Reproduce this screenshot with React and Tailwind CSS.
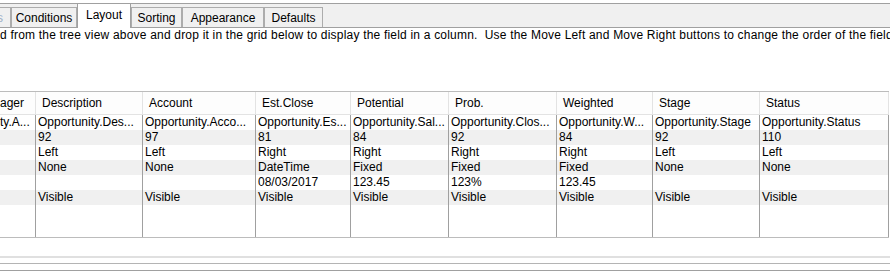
import React from "react";

const cols = [
  { head: "ager", hp: "pl-0", bp: "pl-0", cells: ["ty.A...", "", "", "", "", ""] },
  { head: "Description", cells: ["Opportunity.Des...", "92", "Left", "None", "", "Visible"] },
  { head: "Account", cells: ["Opportunity.Acco...", "97", "Left", "None", "", "Visible"] },
  { head: "Est.Close", cells: ["Opportunity.Es...", "81", "Right", "DateTime", "08/03/2017", "Visible"] },
  { head: "Potential", cells: ["Opportunity.Sal...", "84", "Right", "Fixed", "123.45", "Visible"] },
  { head: "Prob.", cells: ["Opportunity.Clos...", "92", "Right", "Fixed", "123%", "Visible"] },
  { head: "Weighted", cells: ["Opportunity.W...", "84", "Right", "Fixed", "123.45", "Visible"] },
  { head: "Stage", cells: ["Opportunity.Stage", "92", "Left", "None", "", "Visible"] },
  { head: "Status", cells: ["Opportunity.Status", "110", "Left", "None", "", "Visible"] },
];

const tabs = [
  { label: "Conditions", w: "w-[66px]" },
  { label: "Layout", w: "w-[54px]", active: true },
  { label: "Sorting", w: "w-[51px]" },
  { label: "Appearance", w: "w-[82px]" },
  { label: "Defaults", w: "w-[59px]" },
];

export default function App() {
  return (
    <div className="w-[890px] h-[275px] bg-white overflow-hidden font-['Liberation_Sans',Arial,sans-serif] text-[12px] text-black">
      <div className="h-[3px] bg-white" />
      {/* tab strip */}
      <div className="flex items-end h-[25px] bg-[#f0f0f0] border-t border-b border-[#a0a0a0]">
        <div className="w-[11px] h-[20px] border-t border-r border-[#acacac] bg-[#f0f0f0] overflow-hidden flex items-center">
          <span className="ml-[-3px] text-[#9fb0c8] leading-none">s</span>
        </div>
        {tabs.map((t) =>
          t.active ? (
            <div
              key={t.label}
              className={`${t.w} h-[25px] -mb-px bg-white border-t border-l border-r border-[#a0a0a0] flex justify-center pt-[4px] leading-[14px] relative z-10`}
            >
              {t.label}
            </div>
          ) : (
            <div
              key={t.label}
              className={`${t.w} h-[20px] bg-[#f0f0f0] border-t border-l border-r border-[#acacac] flex items-center justify-center leading-[14px]`}
            >
              {t.label}
            </div>
          )
        )}
      </div>
      {/* instruction */}
      <div className="whitespace-nowrap leading-[12px] pt-[1px] tracking-[0.2px]">
        d from the tree view above and drop it in the grid below to display the field in a column.&nbsp; Use the Move Left and Move Right buttons to change the order of the fields
      </div>
      {/* grid */}
      <div className="mt-[50px] w-[889px] h-[147px] border-t border-b border-[#bcbcbc] grid grid-cols-[36px_107px_113px_95px_98px_108px_96px_107px_129px]">
        {cols.map((c, i) => (
          <div key={i} className="flex flex-col min-w-0">
            <div
              className={`h-[23px] shrink-0 bg-[#fdfdfd] border-r border-b border-[#e3e3e3] flex items-center whitespace-nowrap overflow-hidden ${c.hp || "pl-[6px]"}`}
            >
              {c.head}
            </div>
            {c.cells.map((v, r) => (
              <div
                key={r}
                className={`h-[15px] shrink-0 leading-[15px] border-r border-[#a0a0a0] whitespace-nowrap overflow-hidden ${c.bp || "pl-[2px]"} ${r % 2 === 1 ? "bg-[#f0f0f0]" : "bg-white"}`}
              >
                {v}
              </div>
            ))}
            <div className="flex-1 bg-white border-r border-[#a0a0a0]" />
          </div>
        ))}
      </div>
      {/* bottom lines */}
      <div className="mt-[18px] h-[2px] bg-[#e0e0e0]" />
      <div className="mt-[5px] h-[1px] bg-[#b4b4b4]" />
      <div className="mt-[6px] h-[1px] bg-[#a0a0a0]" />
    </div>
  );
}
